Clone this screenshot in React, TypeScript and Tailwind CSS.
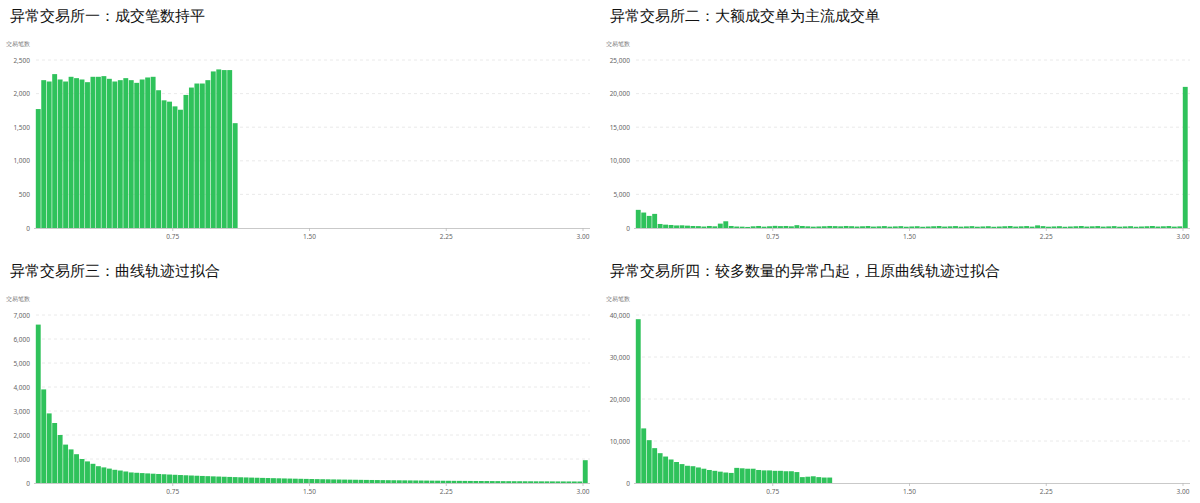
const X0 = 33;
const STEP = 5.47;
const TOP = 30;
const BASE = 198;

function decay(n: number, start: number, end: number, k: number) {
  return Array.from({ length: n }, (_, i) => end + (start - end) * Math.exp(-k * i));
}

const d1 = [1770, 2200, 2180, 2290, 2210, 2180, 2250, 2230, 2210, 2170, 2250, 2250, 2260, 2220, 2180, 2200, 2230, 2200, 2160, 2210, 2240, 2250, 2050, 1900, 1880, 1810, 1760, 1980, 2090, 2150, 2150, 2200, 2330, 2360, 2350, 2350, 1560];

const d2 = [2700, 2300, 1800, 2100, 600, 500, 450, 380, 400, 350, 300, 280, 220, 300, 250, 650, 1000, 300, 220, 200, 160, 250, 300, 200, 260, 320, 280, 300, 250, 420, 300, 250, 200, 230, 260, 300, 280, 250, 300, 270];
while (d2.length < 100) d2.push(180 + ((d2.length * 37) % 120) + (d2.length === 73 ? 150 : 0));
d2.push(21000);

const d3 = [6600, 3900, 2900, 2500, 2000, 1600, 1400, 1200, 1000, 900, 800, 700, 650, 600, 550, 520, 480, ...decay(83, 440, 40, 0.035)];
d3.push(950);

const d4 = [39000, 13000, 10200, 8300, 7100, 6300, 5600, 5000, 4500, 4100, 4000, 3700, 3400, 3100, 2900, 2700, 2500, 2400, 3600, 3500, 3400, 3400, 3100, 3000, 3000, 2900, 2900, 2800, 2800, 2600, 1400, 1500, 1600, 1400, 1300, 1300];

type ChartProps = { title: string; data: number[]; max: number; ticks: number[] };

function Chart({ title, data, max, ticks }: ChartProps) {
  const h = BASE - TOP;
  return (
    <div className="w-[600px] flex flex-col font-['Noto_Sans_CJK_SC','Liberation_Sans',sans-serif]">
      <div className="pl-[10px] pt-[4px] h-[30px] text-[15px] text-[#111]">{title}</div>
      <svg width="600" height="222">
        <text x="6" y="16" fontSize="6" fill="#777">交易笔数</text>
        {ticks.map((t, i) => {
          const y = BASE - (t / max) * h;
          return (
            <g key={i}>
              <text x="30" y={y + 2.5} fontSize="6.5" fill="#666" textAnchor="end">
                {t.toLocaleString("en-US")}
              </text>
              {t > 0 && (
                <line x1="36" x2="590" y1={y} y2={y} stroke="#e4e4e4" strokeWidth="0.8" strokeDasharray="3 3" />
              )}
            </g>
          );
        })}
        {data.map((v, i) => {
          const bh = (v / max) * h;
          return <rect key={i} x={X0 + 2.8 + i * STEP} y={BASE - bh} width={4.9} height={bh} fill="#2fc25b" />;
        })}
        <line x1="34" x2="590" y1={BASE + 0.5} y2={BASE + 0.5} stroke="#bbb" strokeWidth="0.8" />
        {[0.75, 1.5, 2.25, 3].map((t) => {
          const x = X0 + 3 + (t / 0.03) * STEP;
          return (
            <g key={t}>
              <line x1={x} x2={x} y1={BASE} y2={BASE + 3} stroke="#bbb" strokeWidth="0.8" />
              <text x={x} y={BASE + 11} fontSize="6.5" fill="#666" textAnchor="middle">
                {t.toFixed(2)}
              </text>
            </g>
          );
        })}
      </svg>
    </div>
  );
}

export default function App() {
  return (
    <div className="w-[1200px] h-[503px] bg-white flex flex-col overflow-hidden">
      <div className="flex h-[252px]">
        <Chart title="异常交易所一：成交笔数持平" data={d1} max={2500} ticks={[0, 500, 1000, 1500, 2000, 2500]} />
        <Chart title="异常交易所二：大额成交单为主流成交单" data={d2} max={25000} ticks={[0, 5000, 10000, 15000, 20000, 25000]} />
      </div>
      <div className="flex pt-[3px]">
        <Chart title="异常交易所三：曲线轨迹过拟合" data={d3} max={7000} ticks={[0, 1000, 2000, 3000, 4000, 5000, 6000, 7000]} />
        <Chart title="异常交易所四：较多数量的异常凸起，且原曲线轨迹过拟合" data={d4} max={40000} ticks={[0, 10000, 20000, 30000, 40000]} />
      </div>
    </div>
  );
}
